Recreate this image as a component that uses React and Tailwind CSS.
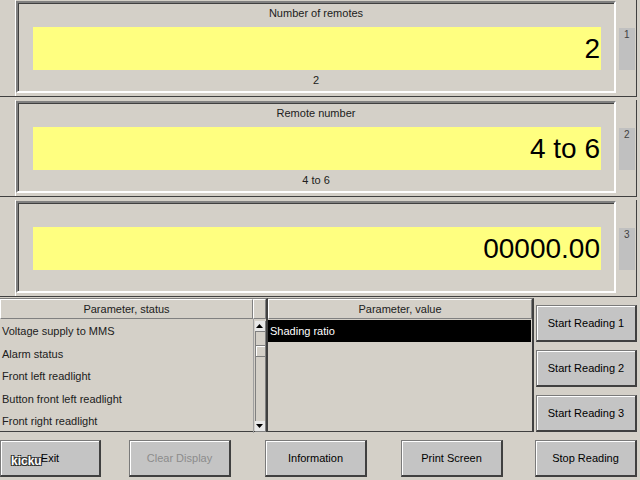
import React from "react";

const BTN =
  "flex items-center justify-center bg-[#c4c4c4] border border-[#7a7a7a] border-r-2 border-b-2 border-r-[#404040] border-b-[#404040] shadow-[inset_1px_1px_0_#ffffff] text-[11px]";

function Row({ label, big, small, tab, last }) {
  return (
    <div className="flex flex-col">
      <div className="h-[96px] w-[637px] flex border-r border-[#404040]">
        <div className="w-[16px] border-r border-white" />
        <div className="mt-[1px] h-[92px] w-[600px] flex flex-col border-2 border-t-[#808080] border-l-[#808080] border-r-white border-b-white shadow-[inset_1px_1px_0_#404040]">
          <div className="h-[24px] pb-[4px] flex items-center justify-center text-[11px] text-[#202020]">
            {label}
          </div>
          <div className="ml-[15px] mr-[13px] h-[43px] bg-[#ffff80] flex items-center justify-end pr-[1px] text-[28px] leading-none text-black">
            {big}
          </div>
          <div className="h-[20px] flex items-center justify-center text-[11px] text-[#202020]">
            {small}
          </div>
        </div>
        <div className="flex-1 pl-[3px] pt-[28px]">
          <div className="w-[16px] h-[42px] bg-[#c0c0c0] text-[10px] text-[#404040] pl-[5px] pt-[1px] leading-[12px]">
            {tab}
          </div>
        </div>
      </div>
      <div className="h-[1px] w-[637px] bg-[#404040]" />
      {!last && <div className="h-[3px]" />}
    </div>
  );
}

function Arrow({ up }) {
  return (
    <svg width="7" height="4" viewBox="0 0 7 4">
      {up ? (
        <polygon points="0,4 7,4 3.5,0" fill="#000" />
      ) : (
        <polygon points="0,0 7,0 3.5,4" fill="#000" />
      )}
    </svg>
  );
}

const HEADER =
  "h-[20px] flex items-center justify-center text-[11px] text-[#202020] border-t border-l border-white border-r border-b border-r-[#808080] border-b-[#808080]";

export default function App() {
  const items = [
    "Voltage supply to MMS",
    "Alarm status",
    "Front left readlight",
    "Button front left readlight",
    "Front right readlight",
  ];
  return (
    <div className="w-[640px] h-[480px] bg-[#d4d0c8] overflow-hidden font-['Liberation_Sans',Arial,sans-serif] text-black">
      <Row label="Number of remotes" big="2" small="2" tab="1" />
      <Row label="Remote number" big="4 to 6" small="4 to 6" tab="2" />
      <Row label="" big="00000.00" small="" tab="3" last />

      <div className="mt-[1px] h-[135px] flex">
        {/* left list */}
        <div className="w-[268px] h-[134px] flex flex-col border-t border-[#808080] border-r-2 border-r-[#404040] border-b border-b-[#404040]">
          <div className="flex">
            <div className={"w-[253px] " + HEADER}>Parameter, status</div>
            <div className="w-[13px] h-[20px] border-t border-l border-white border-r border-b border-r-[#808080] border-b-[#808080]" />
          </div>
          <div className="flex flex-1">
            <div className="w-[253px] flex flex-col pt-[1px]">
              {items.map((t) => (
                <div
                  key={t}
                  className="h-[22.5px] flex items-center pl-[2px] text-[11px] text-[#202020] whitespace-nowrap"
                >
                  {t}
                </div>
              ))}
            </div>
            <div className="w-[13px] flex flex-col items-center border-l border-[#a0a0a0]">
              <div className="mt-[2px] w-[11px] h-[11px] flex items-center justify-center bg-[#e8e8e8] border-r border-b border-[#808080]">
                <Arrow up />
              </div>
              <div className="w-[11px] flex-1 flex flex-col border-l border-r border-[#808080]">
                <div className="mt-[13px] h-[12px] bg-[#d4d0c8] border-t border-b border-[#808080] shadow-[inset_1px_1px_0_#ffffff]" />
              </div>
              <div className="mb-[1px] w-[11px] h-[11px] flex items-center justify-center bg-[#e8e8e8] border-r border-b border-[#808080]">
                <Arrow />
              </div>
            </div>
          </div>
        </div>

        {/* middle list */}
        <div className="w-[266px] h-[134px] flex flex-col border-t border-[#808080] border-r-2 border-r-[#404040] border-b border-b-[#404040]">
          <div className={HEADER}>Parameter, value</div>
          <div className="mt-[1px] mr-[1px] h-[22px] bg-black text-white text-[11px] flex items-center pl-[2px]">
            Shading ratio
          </div>
        </div>

        {/* right buttons */}
        <div className="ml-[2px] w-[101px] pt-[7px] flex flex-col gap-[8px]">
          <div className={"h-[37px] " + BTN}>Start Reading 1</div>
          <div className={"h-[37px] " + BTN}>Start Reading 2</div>
          <div className={"h-[37px] " + BTN}>Start Reading 3</div>
        </div>
      </div>

      <div className="mt-[7px] w-[637px] flex">
        <div className={"relative w-[101px] h-[37px] " + BTN}>
          Exit
          <span className="absolute left-[10px] top-[14px] text-[12px] font-bold text-white leading-none [text-shadow:1px_1px_0_#333,-1px_-1px_0_#333,1px_-1px_0_#333,-1px_1px_0_#333]">
            kicku
          </span>
        </div>
        <div className={"ml-[28px] w-[102px] h-[37px] text-[#8c8c8c] " + BTN}>Clear Display</div>
        <div className={"ml-[34px] w-[102px] h-[37px] " + BTN}>Information</div>
        <div className={"ml-[34px] w-[102px] h-[37px] " + BTN}>Print Screen</div>
        <div className={"ml-[32px] w-[102px] h-[37px] " + BTN}>Stop Reading</div>
      </div>
    </div>
  );
}
